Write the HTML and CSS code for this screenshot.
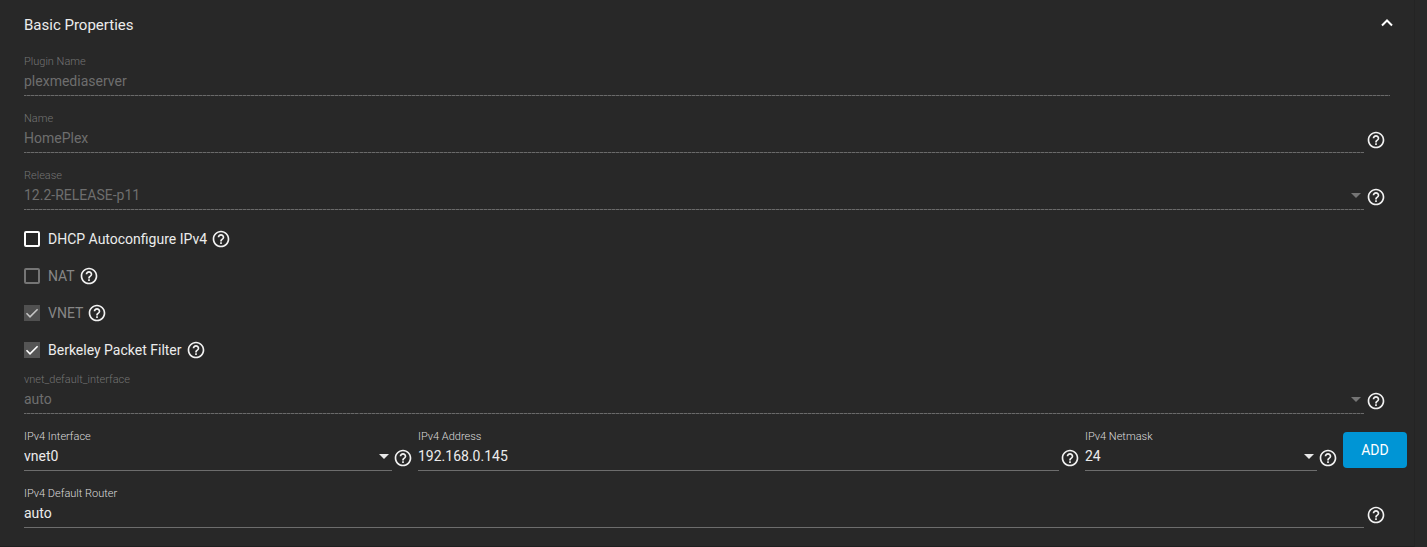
FILE: index.html
```html
<!DOCTYPE html>
<html lang="en">
<head>
<meta charset="utf-8">
<title>Basic Properties</title>
<link rel="stylesheet" href="styles.css">
</head>
<body>
<svg class="sprite" aria-hidden="true">
  <symbol id="help" viewBox="0 0 24 24"><path d="M11 18h2v-2h-2v2zm1-16C6.480 2 2 6.480 2 12s4.480 10 10 10 10-4.480 10-10S17.520 2 12 2zm0 18c-4.410 0-8-3.590-8-8s3.590-8 8-8 8 3.590 8 8-3.590 8-8 8zm0-14c-2.210 0-4 1.790-4 4h2c0-1.100.9-2 2-2s2 .9 2 2c0 2-3 1.750-3 5h2c0-2.250 3-2.500 3-5 0-2.210-1.790-4-4-4z"/></symbol>
</svg>
<form class="panel">
  <header class="panel-header">
    <h1 class="title">Basic Properties</h1>
    <button class="toggle" type="button" aria-label="Collapse"><svg class="chevron" viewBox="0 0 12 8"><path d="M1 6.500 6 1.500 11 6.500"/></svg></button>
  </header>

  <div class="field disabled">
    <div class="body"><label for="plugin">Plugin Name</label><input class="control" id="plugin" value="plexmediaserver" disabled></div>
  </div>
  <div class="field disabled">
    <div class="body"><label for="name">Name</label><input class="control" id="name" value="HomePlex" disabled></div>
    <button class="help" type="button" aria-label="Help"><svg><use href="#help"/></svg></button>
  </div>
  <div class="field disabled">
    <div class="body"><label for="release">Release</label><select class="control" id="release" disabled><option>12.2-RELEASE-p11</option></select></div>
    <button class="help" type="button" aria-label="Help"><svg><use href="#help"/></svg></button>
  </div>

  <div class="checks">
    <div class="check"><label><input type="checkbox">DHCP Autoconfigure IPv4</label><button class="help" type="button" aria-label="Help"><svg><use href="#help"/></svg></button></div>
    <div class="check"><label class="off"><input type="checkbox" disabled>NAT</label><button class="help" type="button" aria-label="Help"><svg><use href="#help"/></svg></button></div>
    <div class="check"><label class="off"><input type="checkbox" checked disabled>VNET</label><button class="help" type="button" aria-label="Help"><svg><use href="#help"/></svg></button></div>
    <div class="check"><label><input type="checkbox" checked>Berkeley Packet Filter</label><button class="help" type="button" aria-label="Help"><svg><use href="#help"/></svg></button></div>
  </div>

  <div class="field disabled">
    <div class="body"><label for="vnetif">vnet_default_interface</label><select class="control" id="vnetif" disabled><option>auto</option></select></div>
    <button class="help" type="button" aria-label="Help"><svg><use href="#help"/></svg></button>
  </div>

  <div class="address-row">
    <div class="field">
      <div class="body"><label for="if4">IPv4 Interface</label><select class="control" id="if4"><option>vnet0</option></select></div>
      <button class="help" type="button" aria-label="Help"><svg><use href="#help"/></svg></button>
    </div>
    <div class="field">
      <div class="body"><label for="ip4">IPv4 Address</label><input class="control" id="ip4" value="192.168.0.145"></div>
      <button class="help" type="button" aria-label="Help"><svg><use href="#help"/></svg></button>
    </div>
    <div class="field">
      <div class="body"><label for="mask">IPv4 Netmask</label><select class="control" id="mask"><option>24</option></select></div>
      <button class="help" type="button" aria-label="Help"><svg><use href="#help"/></svg></button>
    </div>
    <button class="add" type="button">ADD</button>
  </div>

  <div class="field">
    <div class="body"><label for="router">IPv4 Default Router</label><input class="control" id="router" value="auto"></div>
    <button class="help" type="button" aria-label="Help"><svg><use href="#help"/></svg></button>
  </div>
</form>
</body>
</html>
```
FILE: styles.css
```css
* { box-sizing: border-box; }
body {
  margin: 0;
  background: #282828;
  color: #ececec;
  font-family: Roboto, "Liberation Sans", sans-serif;
  font-size: 14px;
  line-height: 20px;
}
.sprite { display: none; }
.panel {
  display: flex;
  flex-direction: column;
  gap: 16px;
  margin-right: 12px;
  padding: 15px 24px 18px;
  border-right: 1px solid #242424;
  border-bottom: 1px solid #1f1f1f;
}
.panel-header {
  display: flex;
  justify-content: space-between;
  align-items: flex-start;
  height: 20px;
  margin-bottom: 4px;
}
.title { margin: 0; font-size: 15px; font-weight: 400; }
button { margin: 0; padding: 0; border: 0; background: none; color: inherit; font: inherit; }
.toggle { padding: 4px 0; margin-right: -3px; }
.chevron { display: block; width: 12px; height: 8px; fill: none; stroke: #fff; stroke-width: 2; }

.field { display: flex; align-items: flex-end; min-width: 0; }
.body { flex: 1; min-width: 0; display: flex; flex-direction: column; gap: 2px; }
.body label { font-size: 11px; font-weight: 300; line-height: 14px; color: #dcdcdc; }
.control {
  appearance: none;
  display: block;
  width: 100%;
  height: 25px;
  margin: 0;
  padding: 0 0 4px;
  border: 0;
  border-bottom: 1px solid #6d6d6d;
  border-radius: 0;
  outline: 0;
  background: transparent;
  color: #ececec;
  font: inherit;
  opacity: 1;
}
select.control {
  background: url("data:image/svg+xml,%3Csvg xmlns='http://www.w3.org/2000/svg' viewBox='0 0 10 5'%3E%3Cpath fill='%23e8e8e8' d='M0 0h10L5 5z'/%3E%3C/svg%3E") right 3px top 8px / 10px 5px no-repeat;
}
.disabled .body label { color: #747474; }
.disabled .control {
  color: #6e6e6e;
  border-image: repeating-linear-gradient(to right, #6a6a6a 0 3px, #484848 3px 4px) 1;
}
.disabled select.control {
  background-image: url("data:image/svg+xml,%3Csvg xmlns='http://www.w3.org/2000/svg' viewBox='0 0 10 5'%3E%3Cpath fill='%23757575' d='M0 0h10L5 5z'/%3E%3C/svg%3E");
}
.help { flex: none; width: 20px; height: 20px; }
.help svg { display: block; width: 20px; height: 20px; fill: #f2f2f2; }
.field .help { margin: 0 4px 3px 2px; }
.address-row .help { margin: 0 5px 3px 1px; }

.checks { display: flex; flex-direction: column; gap: 17px; margin: 3px 0 -3px; }
.check { display: flex; align-items: center; gap: 4px; }
.check label { display: flex; align-items: center; gap: 8px; }
.check .off { color: #868686; }
.check input {
  appearance: none;
  width: 16px;
  height: 16px;
  margin: 0;
  border: 2px solid #fff;
  border-radius: 2px;
}
.check .off input { border-color: #757575; }
.check input:checked {
  border: 0;
  border-radius: 0;
  background: #555 url("data:image/svg+xml,%3Csvg xmlns='http://www.w3.org/2000/svg' viewBox='0 0 16 16'%3E%3Cpath fill='none' stroke='%23fff' stroke-width='1.6' d='M2.500 8.300 6 11.800 13.600 4.200'/%3E%3C/svg%3E") center / 16px no-repeat;
}
.check .off input:checked {
  background: #505050 url("data:image/svg+xml,%3Csvg xmlns='http://www.w3.org/2000/svg' viewBox='0 0 16 16'%3E%3Cpath fill='none' stroke='%23c4c4c4' stroke-width='1.600' d='M2.500 8.300 6 11.800 13.600 4.200'/%3E%3C/svg%3E") center / 16px no-repeat;
}

.address-row {
  display: grid;
  grid-template-columns: 394fr 667fr 258fr 64px;
  margin-right: -17px;
}
.add {
  align-self: start;
  height: 36px;
  margin-top: 2px;
  border-radius: 4px;
  background: #0095d5;
  color: #fff;
}
```
